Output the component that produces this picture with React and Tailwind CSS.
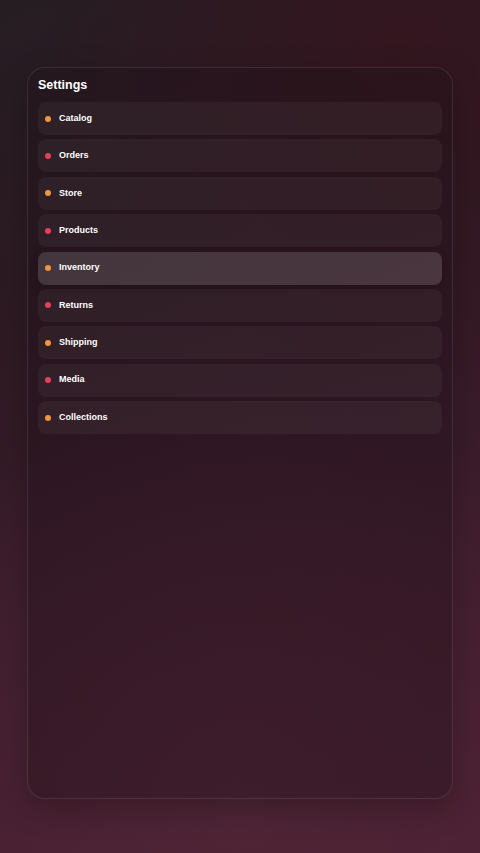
import React from 'react';

const items = [
  { name: 'Catalog', tone: 'orange' },
  { name: 'Orders', tone: 'pink' },
  { name: 'Store', tone: 'orange' },
  { name: 'Products', tone: 'pink' },
  { name: 'Inventory', tone: 'orange', active: true },
  { name: 'Returns', tone: 'pink' },
  { name: 'Shipping', tone: 'orange' },
  { name: 'Media', tone: 'pink' },
  { name: 'Collections', tone: 'orange' },
];

export default function App() {
  return (
    <div
      className="min-h-[853px] w-full bg-[radial-gradient(circle_at_85%_5%,#34161f_0%,transparent_40%),radial-gradient(circle_at_50%_95%,#4f2536_0%,transparent_50%),linear-gradient(160deg,#261d23_0%,#2d1a23_30%,#3a1c2a_60%,#4c2033_100%)] px-[27px] pt-[67px] pb-[54px]"
      style={{ fontFamily: '"Liberation Sans", Arial, sans-serif' }}
    >
      <div className="h-[732px] rounded-[18px] border border-white/10 bg-[#1c0f16]/35 shadow-[0_10px_30px_rgba(0,0,0,0.25)] px-[10px] pt-[8px]">
        <h1 className="text-[12.5px] font-bold text-white leading-4 pt-[1px] pb-[9px]">Settings</h1>
        <div className="flex flex-col gap-[4.4px]">
          {items.map((item) => (
            <div
              key={item.name}
              className={`flex items-center gap-[8px] h-[33px] rounded-lg pl-[7px] ${
                item.active
                  ? 'bg-white/[0.14] shadow-[0_2px_8px_rgba(0,0,0,0.2)]'
                  : 'bg-white/[0.045]'
              }`}
            >
              <span
                className={`w-[6px] h-[6px] rounded-full ${
                  item.tone === 'orange' ? 'bg-[#f0953f]' : 'bg-[#e3405f]'
                }`}
              />
              <span className="text-[9px] font-bold text-white">{item.name}</span>
            </div>
          ))}
        </div>
      </div>
    </div>
  );
}
